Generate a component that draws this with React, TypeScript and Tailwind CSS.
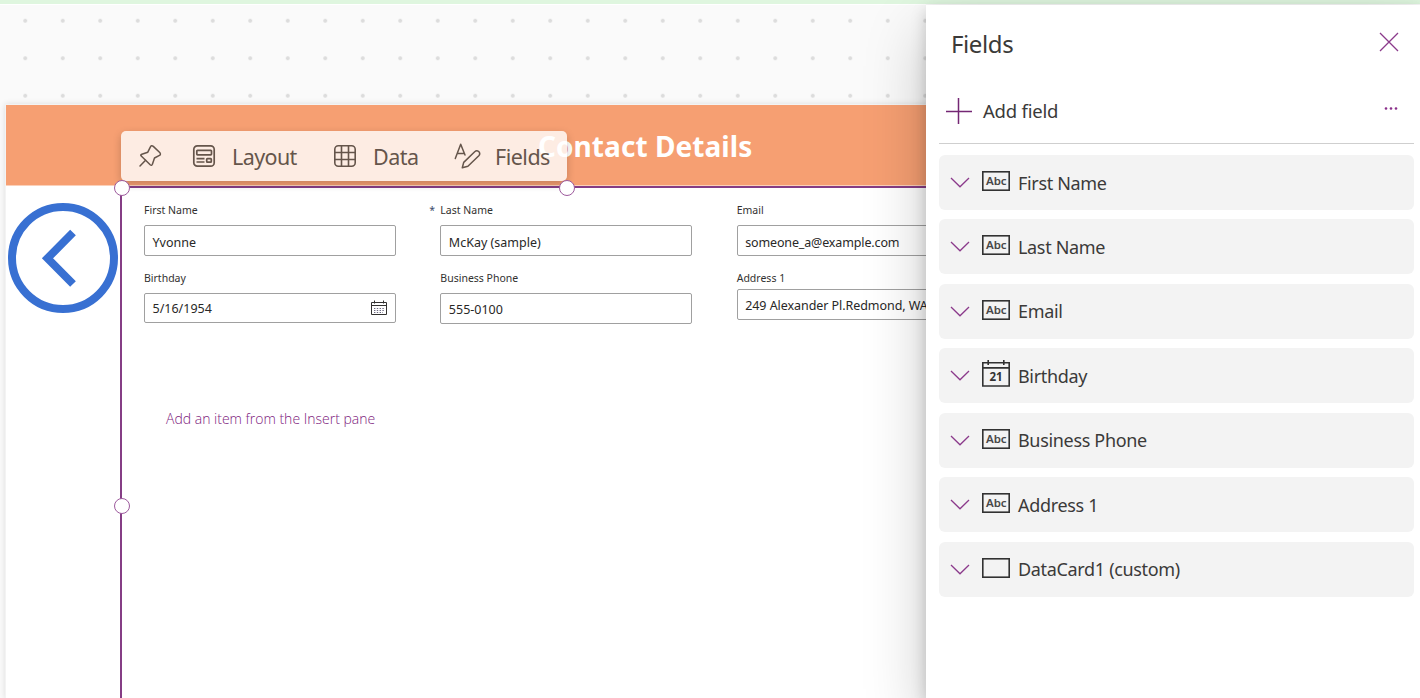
import type { ReactNode } from "react";

function PinIcon() {
  return (
    <svg className="block h-[24px] w-[24px]" viewBox="0 0 24 24" fill="none" stroke="currentColor" strokeWidth="1.5" strokeLinejoin="round" strokeLinecap="round">
      <path d="M12.3 3.1 Q13.4 .9 15.3 2.4 L22 8.8 Q23.2 10.6 21 11.6 L16.5 14 L14.4 20.3 Q13.6 22 12.2 20.8 L3 11.8 Q2.300 10.7 3.800 10.200 L9.800 8.200 Z" />
      <path d="M7.600 16.300 L2 22" />
    </svg>
  );
}

function LayoutIcon() {
  return (
    <svg className="block h-[24px] w-[24px]" viewBox="0 0 24 24" fill="none" stroke="currentColor" strokeWidth="1.7">
      <rect x="1.800" y="1.800" width="20.400" height="20.400" rx="3.500" />
      <rect x="4.800" y="6.300" width="14.700" height="4.500" rx=".7" />
      <path d="M4.500 14.700h8M4.500 18h8" />
      <rect x="14.700" y="14.600" width="4.600" height="3.500" rx=".7" />
    </svg>
  );
}

function GridIcon() {
  return (
    <svg className="block h-[24px] w-[24px]" viewBox="0 0 24 24" fill="none" stroke="currentColor" strokeWidth="1.600">
      <rect x="1.800" y="1.800" width="20.400" height="20.400" rx="3.500" />
      <path d="M8.500 1.800v20.400M15.500 1.800v20.400M1.800 8.500h20.400M1.800 15.500h20.400" />
    </svg>
  );
}

function EditTextIcon() {
  return (
    <svg className="block h-[26px] w-[27px]" viewBox="0 0 27 26" fill="none" stroke="currentColor" strokeWidth="1.500" strokeLinecap="round" strokeLinejoin="round">
      <path d="M1.300 15.500 L6.700 1.200 L11 12M3.300 10.400h7.200" />
      <path d="M8.300 24.700 L9.700 19.400 L20.700 8.700 Q22.700 7 24.700 8.500 Q26.700 10.600 24.800 12.700 L13.900 23.200 Z" />
    </svg>
  );
}

function CalendarIcon() {
  return (
    <svg className="-mt-[3px] block h-[15px] w-[16px]" viewBox="0 0 16 15" fill="none" stroke="#323130">
      <path d="M.5 2.500h15v12H.5zM.5 5.500h15M3.500 .5v3M12.500 .5v3" />
      <path d="M3 8.500h11M3 10.500h11M3 12.500h9" strokeDasharray="1.400 1.400" stroke="#6b6880" />
    </svg>
  );
}

function Chevron() {
  return (
    <svg className="block h-[11px] w-[20px]" viewBox="0 0 20 11" fill="none" stroke="#8b3a8b" strokeWidth="1.300">
      <path d="M1 1 L10 9.800 L19 1" />
    </svg>
  );
}

function TypeIcon({ type }: { type: string }) {
  if (type === "date") {
    return (
      <svg className="-mt-[2px] block h-[27px] w-[28px]" viewBox="0 0 28 27" fill="none" stroke="#323232" strokeWidth="1.600">
        <path d="M.8 2.800h26.400v23.200H.8zM.8 7.900h26.400M6.200 0v5M21.800 0v5" />
        <text x="14" y="20.900" textAnchor="middle" fill="#323232" stroke="none" fontFamily="Noto Sans" fontWeight="700" fontSize="11.500">21</text>
      </svg>
    );
  }
  return (
    <span className="relative block h-[20px] w-[28px]">
      <svg className="block h-[20px] w-[28px]" viewBox="0 0 28 20" fill="none" stroke="#323232" strokeWidth="1.600">
        <rect x=".8" y=".8" width="26.400" height="18.400" />
        {type === "text" && (
          <text x="14.300" y="14.200" textAnchor="middle" fill="#484848" stroke="none" fontFamily="Noto Sans" fontWeight="600" fontSize="11.500">Abc</text>
        )}
      </svg>
    </span>
  );
}

const fields = [
  { name: "First Name", type: "text" },
  { name: "Last Name", type: "text" },
  { name: "Email", type: "text" },
  { name: "Birthday", type: "date" },
  { name: "Business Phone", type: "text" },
  { name: "Address 1", type: "text" },
  { name: "DataCard1 (custom)", type: "card" },
];

function Label({ children, className }: { children: ReactNode; className?: string }) {
  return <div className={`relative h-[14px] text-[10.5px] leading-[14px] whitespace-nowrap text-[#323130] ${className ?? ""}`}>{children}</div>;
}

function Input({ value, className, children }: { value: string; className: string; children?: ReactNode }) {
  return (
    <div className={`flex w-[252px] items-center justify-between rounded-[2px] border border-[#a0a0a0] bg-white pr-[8px] pl-[7.500px] text-[12.500px] leading-none whitespace-nowrap text-[#292827] ${className}`}>
      <span>{value}</span>
      {children}
    </div>
  );
}

function Handle({ className }: { className: string }) {
  return <span className={`absolute h-[16px] w-[16px] rounded-full border-[1.500px] border-[#9d5a9d] bg-white ${className}`} />;
}

function Toolbar() {
  return (
    <div className="absolute top-[126px] left-[121px] flex h-[50px] w-[446px] items-center rounded-[5px] bg-white/80 pl-[17px] text-[21.500px] text-[#65554b] shadow-[0_3px_9px_rgba(0,0,0,0.2)]">
      <PinIcon />
      <span className="ml-[30px]"><LayoutIcon /></span>
      <span className="mt-[3px] ml-[16px] w-[65px] tracking-[-0.600px]">Layout</span>
      <span className="ml-[36px]"><GridIcon /></span>
      <span className="mt-[3px] ml-[16px] w-[46px] tracking-[-0.500px]">Data</span>
      <span className="ml-[35px]"><EditTextIcon /></span>
      <span className="mt-[3px] ml-[14px] tracking-[-0.500px]">Fields</span>
    </div>
  );
}

function Canvas() {
  return (
    <main className="relative h-[694px] w-[926px] overflow-hidden border-t border-white bg-[#fafafa] bg-[radial-gradient(circle_at_center,#dcdcdc_1.500px,transparent_2.300px)] bg-[size:37.500px_37.500px] bg-[position:6.500px_-3px] pt-[99px] pl-[5px]">
      <div className="h-[595px] w-[1000px] border-t border-l border-[#f3f3f3] bg-white shadow-[0_0_6px_rgba(0,0,0,0.120)]">
        <header className="flex h-[81px] w-full items-start border-b border-[#fbd0b9] bg-[#f69f72] pt-[21px] pl-[532px]">
          <h1 className="text-[28px] leading-[40px] font-bold tracking-[0.060px] whitespace-nowrap text-white">Contact Details</h1>
        </header>
        <div className="flex">
          <div className="w-[114px] shrink-0 pt-[16px] pl-[2px]">
            <svg className="block h-[112px] w-[112px] overflow-visible" viewBox="0 0 112 112" fill="none" stroke="#3870d2">
              <circle cx="55" cy="56" r="51" strokeWidth="8" />
              <path d="M65 30.500 L39.500 56.300 L65 82" strokeWidth="8" />
            </svg>
          </div>
          <section className="h-[520px] flex-1 border-t-2 border-l-2 border-[#853d85]">
            <div className="flex gap-[44.350px] pt-[15px] pl-[22px]">
              <div>
                <Label>First Name</Label>
                <Input value="Yvonne" className="mt-[8px] h-[31px] pt-[5px]" />
                <Label className="mt-[15px]">Birthday</Label>
                <Input value="5/16/1954" className="mt-[8px] h-[30px] pt-[2px]">
                  <CalendarIcon />
                </Input>
              </div>
              <div>
                <Label>
                  <span className="absolute left-[-11px] text-[#3b4a6b]">*</span>
                  Last Name
                </Label>
                <Input value="McKay (sample)" className="mt-[8px] h-[31px] pt-[5px]" />
                <Label className="mt-[15px]">Business Phone</Label>
                <Input value="555-0100" className="mt-[8px] h-[31px] pt-[4px]" />
              </div>
              <div>
                <Label>Email</Label>
                <Input value="someone_a@example.com" className="mt-[8px] h-[31px] pt-[5px] tracking-[-0.140px]" />
                <Label className="mt-[15px]">Address 1</Label>
                <Input value="249 Alexander Pl.Redmond, WA" className="mt-[4px] h-[31px] pt-[4px] tracking-[-0.060px]" />
              </div>
            </div>
            <p className="mt-[85px] pl-[44px] font-['Open_Sans','Noto_Sans',sans-serif] text-[14px] leading-[20px] font-light text-[#7d1a7d]">
              Add an item from the Insert pane
            </p>
          </section>
        </div>
      </div>
      <Toolbar />
      <Handle className="top-[174.500px] left-[113.500px]" />
      <Handle className="top-[174.500px] left-[558.500px]" />
      <Handle className="top-[493px] left-[113.500px]" />
    </main>
  );
}

function FieldsPanel() {
  return (
    <aside className="z-10 mt-px h-[693px] w-[494px] bg-white text-[#3b3a39] shadow-[0_25.600px_57.600px_rgba(0,0,0,0.22),0_4.800px_14.400px_rgba(0,0,0,0.18)]">
      <div className="flex h-[78px] items-center justify-between pr-[21px] pl-[25px]">
        <h2 className="text-[24px] tracking-[-0.400px]">Fields</h2>
        <svg className="-mt-[4px] block h-[20px] w-[20px]" viewBox="0 0 20 20" fill="none" stroke="#8b3a8b" strokeWidth="1.300">
          <path d="M1 1 L19 19 M19 1 L1 19" />
        </svg>
      </div>
      <div className="mx-[13px] mr-[6px] flex h-[61px] items-center border-b border-[#cfcfcf] pb-[5px] pl-[7px]">
        <svg className="mt-px block h-[26px] w-[26px]" viewBox="0 0 26 26" fill="none" stroke="#742774" strokeWidth="1.500">
          <path d="M12.500 0v26M0 13.500h26" />
        </svg>
        <span className="ml-[11px] text-[18.500px] tracking-[-0.220px]">Add field</span>
        <svg className="mr-[16px] -mt-[5px] ml-auto block h-[3px] w-[14px]" viewBox="0 0 14 3" fill="#8a2f8a">
          <circle cx="2" cy="1.500" r="1.300" />
          <circle cx="7" cy="1.500" r="1.300" />
          <circle cx="12" cy="1.500" r="1.300" />
        </svg>
      </div>
      <ul className="mt-[11px] mr-[6px] ml-[13px] flex flex-col gap-[9.450px]">
        {fields.map((f) => (
          <li key={f.name} className="flex h-[55px] items-center rounded-[6px] bg-[#f3f3f3] pl-[11px]">
            <Chevron />
            <span className="-mt-[3px] ml-[12px]"><TypeIcon type={f.type} /></span>
            <span className="ml-[8px] text-[18px] leading-[26px] tracking-[-0.330px] whitespace-nowrap">{f.name}</span>
          </li>
        ))}
      </ul>
    </aside>
  );
}

export default function App() {
  return (
    <div className="h-[698px] w-[1420px] overflow-hidden bg-[#fafafa] font-['Noto_Sans','Open_Sans',sans-serif]">
      <div className="h-[4px] bg-[#dff6df]" />
      <div className="flex">
        <Canvas />
        <FieldsPanel />
      </div>
    </div>
  );
}
